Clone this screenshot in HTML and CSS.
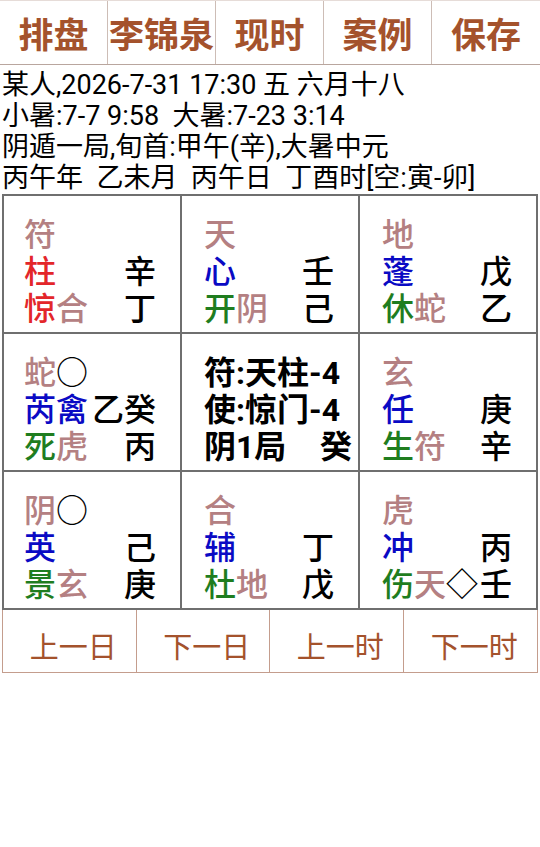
FILE: index.html
```html
<!DOCTYPE html>
<html lang="zh">
<head>
<meta charset="utf-8">
<link rel="stylesheet" href="styles.css">
</head>
<body>
<div class="topbar">
  <div class="tbtn">排盘</div>
  <div class="tbtn">李锦泉</div>
  <div class="tbtn">现时</div>
  <div class="tbtn">案例</div>
  <div class="tbtn">保存</div>
</div>
<div class="info">
  <div class="line">某人,2026-7-31 17:30 五 六月十八</div>
  <div class="line">小暑:7-7 9:58&nbsp;&nbsp;大暑:7-23 3:14</div>
  <div class="line">阴遁一局,旬首:甲午(辛),大暑中元</div>
  <div class="line">丙午年&nbsp;&nbsp;乙未月&nbsp;&nbsp;丙午日&nbsp;&nbsp;丁酉时[空:寅-卯]</div>
</div>
<div class="grid">
  <div class="cell">
    <div class="row"><span class="god">符</span></div>
    <div class="row"><span class="red">柱</span><span>辛</span></div>
    <div class="row"><span><span class="red">惊</span><span class="god">合</span></span><span>丁</span></div>
  </div>
  <div class="cell">
    <div class="row"><span class="god">天</span></div>
    <div class="row"><span class="star">心</span><span>壬</span></div>
    <div class="row"><span><span class="door">开</span><span class="god">阴</span></span><span>己</span></div>
  </div>
  <div class="cell">
    <div class="row"><span class="god">地</span></div>
    <div class="row"><span class="star">蓬</span><span>戊</span></div>
    <div class="row"><span><span class="door">休</span><span class="god">蛇</span></span><span>乙</span></div>
  </div>

  <div class="cell">
    <div class="row"><span><span class="god">蛇</span>○</span></div>
    <div class="row"><span class="star">芮禽</span><span>乙癸</span></div>
    <div class="row"><span><span class="door">死</span><span class="god">虎</span></span><span>丙</span></div>
  </div>
  <div class="cell center">
    <div class="row"><span>符:天柱-4</span></div>
    <div class="row"><span>使:惊门-4</span></div>
    <div class="row"><span>阴1局</span><span>癸</span></div>
  </div>
  <div class="cell">
    <div class="row"><span class="god">玄</span></div>
    <div class="row"><span class="star">任</span><span>庚</span></div>
    <div class="row"><span><span class="door">生</span><span class="god">符</span></span><span>辛</span></div>
  </div>

  <div class="cell">
    <div class="row"><span><span class="god">阴</span>○</span></div>
    <div class="row"><span class="star">英</span><span>己</span></div>
    <div class="row"><span><span class="door">景</span><span class="god">玄</span></span><span>庚</span></div>
  </div>
  <div class="cell">
    <div class="row"><span class="god">合</span></div>
    <div class="row"><span class="star">辅</span><span>丁</span></div>
    <div class="row"><span><span class="door">杜</span><span class="god">地</span></span><span>戊</span></div>
  </div>
  <div class="cell">
    <div class="row"><span class="god">虎</span></div>
    <div class="row"><span class="star">冲</span><span>丙</span></div>
    <div class="row"><span><span class="door">伤</span><span class="god">天</span>◇</span><span>壬</span></div>
  </div>
</div>
<div class="nav">
  <div class="nbtn">上一日</div>
  <div class="nbtn">下一日</div>
  <div class="nbtn">上一时</div>
  <div class="nbtn">下一时</div>
</div>
</body>
</html>
```
FILE: styles.css
```css
html, body {
  margin: 0;
  padding: 0;
  background: #ffffff;
}
body {
  width: 540px;
  font-family: Roboto, "Noto Sans CJK SC", sans-serif;
  color: #000;
}
.topbar {
  display: grid;
  grid-template-columns: repeat(5, 108px);
  border-top: 1px solid #e6dcd8;
  border-bottom: 1px solid #b9a69e;
  box-sizing: border-box;
  height: 65px;
}
.tbtn {
  display: flex;
  align-items: center;
  justify-content: center;
  font-size: 35px;
  font-weight: bold;
  color: #a4522c;
  border-right: 1px solid #cdbdb6;
  white-space: nowrap;
}
.tbtn:last-child {
  border-right: none;
}
.info {
  padding: 5px 0 0 2px;
  font-size: 27px;
  line-height: 31px;
}
.line {
  white-space: nowrap;
}
.grid {
  margin: 0 2px;
  display: grid;
  grid-template-columns: repeat(3, 1fr);
  grid-template-rows: repeat(3, 136px);
  gap: 2px;
  padding: 2px;
  background: #6f6f6f;
}
.cell {
  background: #fff;
  display: flex;
  flex-direction: column;
  justify-content: flex-end;
  padding: 0 24px 4px 22px;
  font-size: 32px;
  font-weight: 500;
  line-height: 37px;
}
.cell:nth-child(3n+1) {
  padding-left: 20px;
}
.row {
  display: flex;
  justify-content: space-between;
  white-space: nowrap;
}
.center {
  font-weight: bold;
  padding-right: 6px;
}
.god { color: #b48082; }
.star { color: #0a0ac4; }
.door { color: #1f7d1f; }
.red { color: #e3262a; }
.nav {
  margin: 0 2px;
  display: grid;
  grid-template-columns: repeat(4, 1fr);
  height: 62px;
  border: 1px solid #c49d8d;
  border-top: none;
}
.nbtn {
  display: flex;
  align-items: center;
  justify-content: center;
  padding: 8px 0 0 8px;
  font-size: 29px;
  color: #a4522c;
  border-right: 1px solid #c49d8d;
}
.nbtn:last-child {
  border-right: none;
}
```
